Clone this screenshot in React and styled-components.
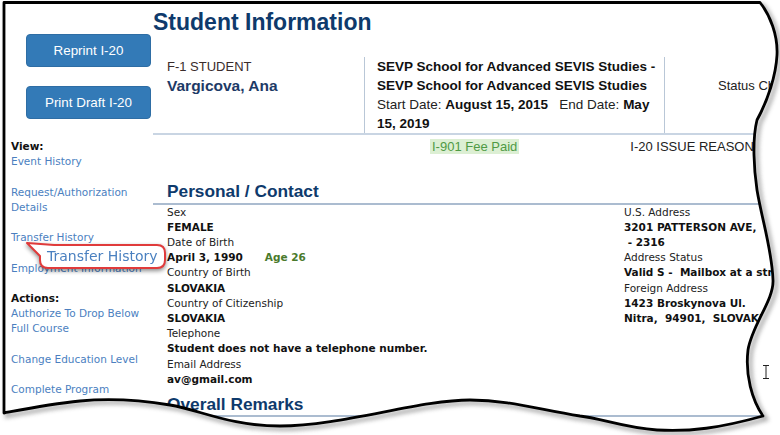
import React from "react";
import styled, { createGlobalStyle } from "styled-components";

const GlobalStyle = createGlobalStyle`
  html, body { margin: 0; padding: 0; background: #fff; }
  body { font-family: "DejaVu Sans", Verdana, sans-serif; }
  * { box-sizing: border-box; }
`;

const PAPER =
  "M4,2.5 L760,2.5 C770,15 778,35 777,55 C776,75 768,100 757,120 C752,140 754,170 757,190 C762,220 772,250 773,280 C774,300 752,325 748,350 C745,375 752,400 763,416 C720,428 690,432 657,430 C625,428 600,418 580,416 C540,410 510,400 470,400 C420,400 340,426 280,426 C230,426 200,410 170,405 C140,400 110,398 80,401 C50,404 20,410 4,413 Z";

const Page = styled.div`
  position: relative;
  width: 780px;
  height: 435px;
  overflow: hidden;
  background: #fff;
`;

const Layout = styled.div`
  display: flex;
  padding-left: 11px;
`;

const Sidebar = styled.aside`
  width: 142px;
  flex: none;
  padding-top: 34px;
  font-size: 10.5px;
  line-height: 15.2px;
`;

const Button = styled.button`
  display: block;
  width: 125px;
  height: 33px;
  margin: 0 0 0 15px;
  padding: 0;
  border: 1px solid #2e6da4;
  border-radius: 4px;
  background: #337ab7;
  color: #fff;
  font: 13.4px "Liberation Sans", Arial, sans-serif;
  & + & {
    margin-top: 19px;
  }
`;

const NavGroup = styled.nav`
  margin-top: ${(p) => p.$top || 0}px;
`;

const NavHeading = styled.div`
  font-weight: bold;
  color: #111;
  white-space: nowrap;
`;

const NavLink = styled.a`
  display: block;
  color: #4b7fbf;
  text-decoration: none;
  white-space: nowrap;
  margin-bottom: 15.2px;
`;

const Main = styled.main`
  flex: 1;
  min-width: 0;
  padding-top: 9px;
`;

const Title = styled.h1`
  margin: 0;
  font: bold 23px/26px "Liberation Sans", Arial, sans-serif;
  color: #0e3a6c;
  white-space: nowrap;
`;

const HeaderTable = styled.div`
  display: grid;
  grid-template-columns: 211px 300px 1fr;
  margin-top: 22px;
  border-bottom: 2px solid #c9d5e3;
  font-family: "Liberation Sans", Arial, sans-serif;
  line-height: 19px;
`;

const Cell = styled.div`
  padding: ${(p) => p.$pt || 0}px 4px 0 ${(p) => p.$pl}px;
  border-left: ${(p) => (p.$divider ? "1px solid #b9c7d7" : "none")};
  font-size: ${(p) => p.$size || 13}px;
  white-space: ${(p) => (p.$nowrap ? "nowrap" : "normal")};
`;

const StudentType = styled.div`
  color: #3a2c2c;
  font-size: 13px;
`;

const StudentName = styled.div`
  color: #1d3a66;
  font-weight: bold;
  font-size: 15.5px;
`;

const SchoolLine = styled.div`
  color: #111;
  font-size: 13.5px;
  font-weight: bold;
  white-space: nowrap;
`;

const Plain = styled.span`
  font-weight: normal;
  color: #222;
`;

const StatusText = styled.span`
  color: #222;
  font-size: 13px;
`;

const FeeRow = styled.div`
  display: flex;
  align-items: center;
  gap: 111px;
  margin-top: 4px;
  padding-left: 277px;
  height: 15px;
  font: 13px/15px "Liberation Sans", Arial, sans-serif;
  white-space: nowrap;
`;

const FeeBadge = styled.span`
  padding: 0 2px;
  background: #dcefd3;
  color: #4f9a45;
`;

const IssueText = styled.span`
  color: #222;
`;

const SectionTitle = styled.h2`
  margin: ${(p) => p.$top}px 0 0;
  padding: 0 0 1.5px 14px;
  font: bold 17.3px/20px "Liberation Sans", Arial, sans-serif;
  color: #0e3a6c;
  border-bottom: 2px solid #abbcd0;
  white-space: nowrap;
`;

const InfoGrid = styled.div`
  display: grid;
  grid-template-columns: 457px 1fr;
  padding-left: 14px;
  font-size: 10.5px;
  line-height: 15.2px;
`;

const InfoColumn = styled.div`
  white-space: nowrap;
`;

const Label = styled.div`
  color: #222;
`;

const Value = styled.div`
  color: #111;
  font-weight: bold;
`;

const Age = styled.span`
  margin-left: 22px;
  color: #4a7a2c;
`;

const Overlay = styled.svg`
  position: absolute;
  left: 0;
  top: 0;
  pointer-events: none;
`;

const Callout = styled.div`
  position: absolute;
  left: 24px;
  top: 240px;
  width: 146px;
  height: 34px;
  filter: drop-shadow(0px 2px 2px rgba(0, 0, 0, 0.45));
`;

const CalloutShape = styled.svg`
  position: absolute;
  left: 0;
  top: 0;
`;

const CalloutText = styled.span`
  position: absolute;
  left: 23px;
  top: 7px;
  font-size: 14px;
  line-height: 18px;
  color: #4a80c0;
  white-space: nowrap;
`;

const Cursor = styled.svg`
  position: absolute;
  left: 760px;
  top: 364px;
`;

const leftInfo = [
  ["Sex", "FEMALE"],
  ["Date of Birth", "April 3, 1990", "Age 26"],
  ["Country of Birth", "SLOVAKIA"],
  ["Country of Citizenship", "SLOVAKIA"],
  ["Telephone", "Student does not have a telephone number."],
  ["Email Address", "av@gmail.com"],
];

export default function App() {
  return (
    <Page>
      <GlobalStyle />
      <Layout>
        <Sidebar>
          <Button>Reprint I-20</Button>
          <Button>Print Draft I-20</Button>
          <NavGroup $top={20}>
            <NavHeading>View:</NavHeading>
            <NavLink href="#">Event History</NavLink>
            <NavLink href="#">
              Request/Authorization
              <br />
              Details
            </NavLink>
            <NavLink href="#">Transfer History</NavLink>
            <NavLink href="#">Employment Information</NavLink>
          </NavGroup>
          <NavGroup>
            <NavHeading>Actions:</NavHeading>
            <NavLink href="#">
              Authorize To Drop Below
              <br />
              Full Course
            </NavLink>
            <NavLink href="#">Change Education Level</NavLink>
            <NavLink href="#">Complete Program</NavLink>
          </NavGroup>
        </Sidebar>

        <Main>
          <Title>Student Information</Title>
          <HeaderTable>
            <Cell $pl={14}>
              <StudentType>F-1 STUDENT</StudentType>
              <StudentName>Vargicova, Ana</StudentName>
            </Cell>
            <Cell $pl={12} $divider>
              <SchoolLine>SEVP School for Advanced SEVIS Studies -</SchoolLine>
              <SchoolLine>SEVP School for Advanced SEVIS Studies</SchoolLine>
              <SchoolLine>
                <Plain>Start Date: </Plain>
                August 15, 2015
                <Plain>{"\u00a0\u00a0 End Date: "}</Plain>
                May
              </SchoolLine>
              <SchoolLine>15, 2019</SchoolLine>
            </Cell>
            <Cell $pl={53} $pt={19} $divider $nowrap>
              <StatusText>Status Change</StatusText>
            </Cell>
          </HeaderTable>

          <FeeRow>
            <FeeBadge>I-901 Fee Paid</FeeBadge>
            <IssueText>I-20 ISSUE REASON</IssueText>
          </FeeRow>

          <SectionTitle $top={27}>Personal / Contact</SectionTitle>
          <InfoGrid>
            <InfoColumn>
              {leftInfo.map(([label, value, age]) => (
                <React.Fragment key={label}>
                  <Label>{label}</Label>
                  <Value>
                    {value}
                    {age && <Age>{age}</Age>}
                  </Value>
                </React.Fragment>
              ))}
            </InfoColumn>
            <InfoColumn>
              <Label>U.S. Address</Label>
              <Value>3201 PATTERSON AVE,</Value>
              <Value>{"\u00a0- 2316"}</Value>
              <Label>Address Status</Label>
              <Value>{"Valid S -\u00a0 Mailbox at a street"}</Value>
              <Label>Foreign Address</Label>
              <Value>1423 Broskynova Ul.</Value>
              <Value>{"Nitra,\u00a0 94901,\u00a0 SLOVAKIA"}</Value>
            </InfoColumn>
          </InfoGrid>

          <SectionTitle $top={7}>Overall Remarks</SectionTitle>
        </Main>
      </Layout>

      <Callout>
        <CalloutShape width="146" height="34" viewBox="0 0 146 34">
          <path
            d="M3,3 L30,5 H133 Q141,5 141,13 V20 Q141,28 133,28 H24 Q16,28 16,20 V16 Z"
            fill="#fff"
            stroke="#e03b3b"
            strokeWidth="2"
            strokeLinejoin="round"
          />
        </CalloutShape>
        <CalloutText>Transfer History</CalloutText>
      </Callout>

      <Overlay width="780" height="435" viewBox="0 0 780 435">
        <defs>
          <filter id="tornBlur" x="-10%" y="-10%" width="120%" height="120%">
            <feGaussianBlur stdDeviation="2" />
          </filter>
          <clipPath id="outsidePaper">
            <path d={`M0,0H780V435H0Z ${PAPER}`} clipRule="evenodd" />
          </clipPath>
        </defs>
        <path d={`M0,0H780V435H0Z ${PAPER}`} fill="#fff" fillRule="evenodd" />
        <g clipPath="url(#outsidePaper)">
          <path
            d={PAPER}
            transform="translate(3,3)"
            fill="none"
            stroke="#8a8a8a"
            strokeWidth="4"
            filter="url(#tornBlur)"
            opacity="0.7"
          />
        </g>
        <path d={PAPER} fill="none" stroke="#000" strokeWidth="2.8" strokeLinejoin="round" />
      </Overlay>

      <Cursor width="12" height="16" viewBox="0 0 12 16">
        <path d="M3,1.5 H9 M6,1.5 V14.5 M3,14.5 H9" stroke="#222" strokeWidth="1" fill="none" />
      </Cursor>
    </Page>
  );
}
